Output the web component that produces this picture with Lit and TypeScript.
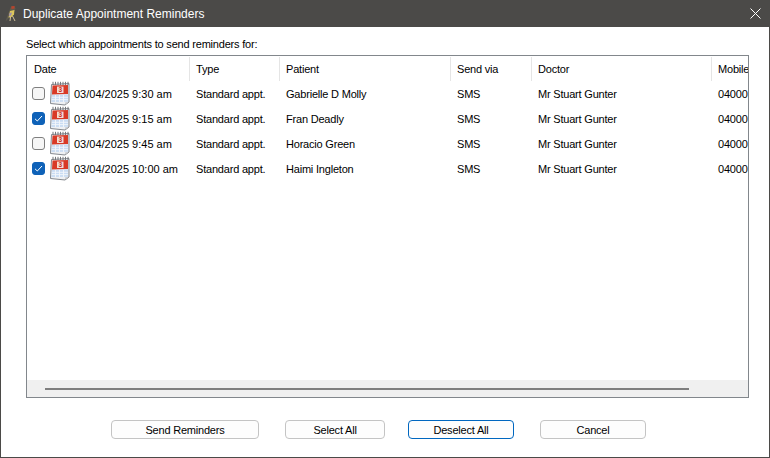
import { LitElement, html, css, svg } from "lit";
import { customElement } from "lit/decorators.js";

const columns = ["Date", "Type", "Patient", "Send via", "Doctor", "Mobile"];
const rows = [
  { checked: false, date: "03/04/2025 9:30 am", patient: "Gabrielle D Molly" },
  { checked: true, date: "03/04/2025 9:15 am", patient: "Fran Deadly" },
  { checked: false, date: "03/04/2025 9:45 am", patient: "Horacio Green" },
  { checked: true, date: "03/04/2025 10:00 am", patient: "Haimi Ingleton" },
];

const calendar = html`<svg class="cal" viewBox="0 0 20 25" width="20" height="25">
  <path d="M1.5 3.5 L19 2.5 L19 21 L15 24 L0.5 22.5 Z" fill="#eef0f3" stroke="#85898f" stroke-width="1"/>
  ${[3, 5.5, 8, 10.5, 13, 15.5, 18].map((x) => svg`<path d="M${x} 0.8 V4" stroke="#74777b" stroke-width="1"/>`)}
  <path d="M2.5 4.5 L18 4 L18 13 L2 13.5 Z" fill="#d93a26"/>
  <rect x="7" y="5.6" width="6.5" height="6.4" fill="#f4dcd6"/>
  <text x="10.2" y="11.4" font-size="6.5" font-weight="700" text-anchor="middle" fill="#c9301e" font-family="Liberation Sans, sans-serif">3</text>
  <path d="M2 14 L18 13.5 L18 20.8 L1.4 21 Z" fill="#c9dcf3"/>
  <path d="M2 16.3 H18 M1.7 18.6 H18 M5.5 14 V21 M9.5 14 V21 M13.5 14 V21" stroke="#f3f6fb" stroke-width="0.9"/>
  <path d="M15 21.5 L18.5 21 L15.5 23.5 Z" fill="#c4c6c9"/>
</svg>`;

const bird = html`<svg class="bird" viewBox="0 0 16 20" width="16" height="20">
  <path d="M7 2.5 L10.5 2 L11.5 4.5 L10.5 7 L8 12 L4.5 14.5 L1.5 17.5 L3 13 L4.5 9 Z" fill="#5f5a4c"/>
  <path d="M7.3 2.2 L10.5 2 L10.5 4.6 L7.5 5 Z" fill="#b8432e"/>
  <path d="M6 7 L10.5 6 L10 10.5 L7.5 13 L4.5 13.5 Z" fill="#dcc65c"/>
  <path d="M5.5 9 L8 8.5 L7 11.5 L5 12.5 Z" fill="#9a8cb0"/>
  <path d="M6.5 13 L6 17 M8.5 12 L11 17" stroke="#d2c19a" stroke-width="1" fill="none"/>
</svg>`;

const check = html`<svg viewBox="0 0 13 13" width="13" height="13"><path d="M3 6.8 L5.3 9 L10 4" fill="none" stroke="#fff" stroke-width="1"/></svg>`;

@customElement("app-root")
export class AppRoot extends LitElement {
  static styles = css`
    :host { display: block; width: 770px; height: 458px; font-family: "Liberation Sans", Arial, sans-serif; font-size: 11px; letter-spacing: -0.2px; color: #000; }
    .window { box-sizing: border-box; width: 770px; height: 458px; display: flex; flex-direction: column; background: #fff; border: 1px solid #4b4a48; border-top: 0; }
    .titlebar { height: 27px; flex: none; margin: 0 -1px; background: #4b4a48; color: #fff; display: flex; align-items: center; font-size: 12px; letter-spacing: 0; }
    .bird { flex: none; margin-left: 4px; margin-right: 3px; }
    .title { flex: 1; }
    .close { flex: none; width: 13px; height: 13px; margin-right: 8px; }
    .content { flex: 1; display: flex; flex-direction: column; padding: 9px 20px 18px 25px; }
    .label { height: 19px; line-height: 17px; flex: none; }
    .list { box-sizing: border-box; height: 343px; flex: none; border: 1px solid #82878c; display: flex; flex-direction: column; overflow: hidden; }
    .grid { flex: 1; display: flex; flex-direction: column; overflow: hidden; }
    .row { display: grid; grid-template-columns: 163px 90px 171px 81px 180px 100px; height: 25px; flex: none; align-items: center; }
    .head .cell { height: 24px; border-right: 1px solid #e5e5e5; box-sizing: border-box; line-height: 24px; }
    .head .cell:first-child { padding-left: 7px; }
    .cell { white-space: nowrap; overflow: hidden; padding-left: 6px; }
    .cell.datecell { display: flex; align-items: center; padding-left: 5px; height: 25px; letter-spacing: 0; }
    .box { box-sizing: border-box; width: 13px; height: 13px; border-radius: 3px; border: 1px solid #7f7f7f; background: #f6f6f6; flex: none; }
    .box.on { background: #0f62b8; border-color: #0f62b8; display: flex; }
    .box.on svg { margin: -1px; }
    .cal { flex: none; margin-left: 5px; margin-right: 4px; }
    .track { height: 17px; flex: none; background: #f0f0f0; display: flex; align-items: center; padding: 0 59px 0 18px; }
    .thumb { flex: 1; height: 2px; background: #7f7f7f; }
    .buttons { flex: 1; display: flex; align-items: flex-end; padding-left: 85px; }
    .btn { box-sizing: border-box; height: 19px; border: 1px solid #c4c4c4; border-radius: 4px; background: #fdfdfd; font: inherit; letter-spacing: inherit; color: #000; padding: 1px 0 0; line-height: 16px; }
    .btn.focus { border-color: #0067c0; }
    .send { width: 148px; margin-right: 26px; }
    .all { width: 100px; margin-right: 23px; }
    .none { width: 106px; margin-right: 26px; }
    .cancel { width: 106px; }
  `;

  render() {
    return html`<div class="window">
      <div class="titlebar">
        ${bird}
        <span class="title">Duplicate Appointment Reminders</span>
        <svg class="close" viewBox="0 0 13 13"><path d="M1.5 1.5 L11.5 11.5 M11.5 1.5 L1.5 11.5" stroke="#fff" stroke-width="1"/></svg>
      </div>
      <div class="content">
        <div class="label">Select which appointments to send reminders for:</div>
        <div class="list">
          <div class="grid">
            <div class="row head">${columns.map((c) => html`<div class="cell">${c}</div>`)}</div>
            ${rows.map((r) => html`<div class="row">
              <div class="cell datecell">
                <span class="box ${r.checked ? "on" : ""}">${r.checked ? check : ""}</span>
                ${calendar}
                <span>${r.date}</span>
              </div>
              <div class="cell">Standard appt.</div>
              <div class="cell">${r.patient}</div>
              <div class="cell">SMS</div>
              <div class="cell">Mr Stuart Gunter</div>
              <div class="cell">04000</div>
            </div>`)}
          </div>
          <div class="track"><div class="thumb"></div></div>
        </div>
        <div class="buttons">
          <button class="btn send">Send Reminders</button>
          <button class="btn all">Select All</button>
          <button class="btn none focus">Deselect All</button>
          <button class="btn cancel">Cancel</button>
        </div>
      </div>
    </div>`;
  }
}
